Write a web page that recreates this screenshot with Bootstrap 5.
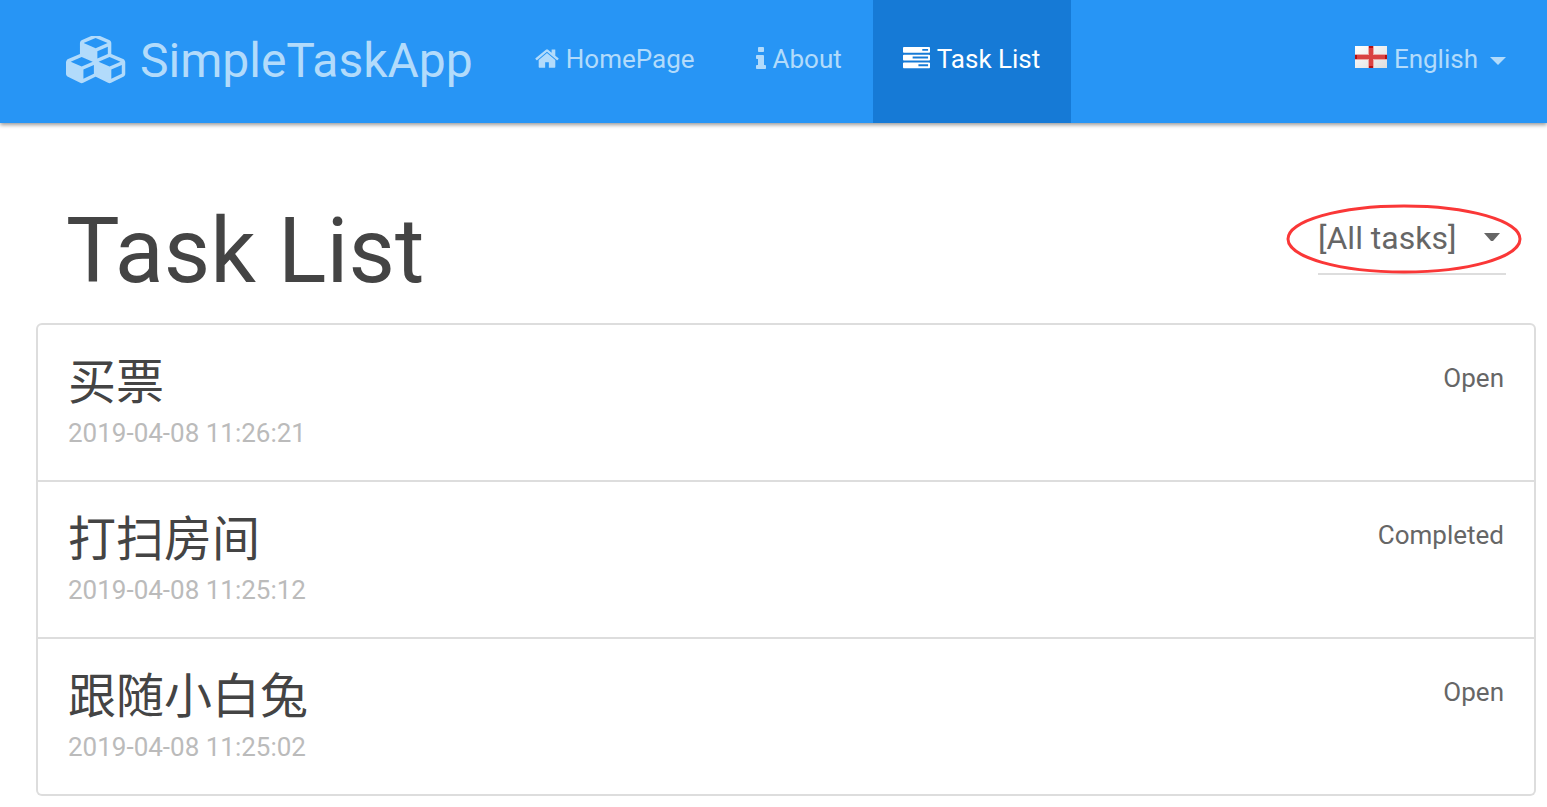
<!DOCTYPE html>
<html lang="en">
<head>
<meta charset="utf-8">
<meta name="viewport" content="width=device-width, initial-scale=1">
<title>Task List - SimpleTaskApp</title>
<link href="https://cdn.jsdelivr.net/npm/bootstrap@5.3.0/dist/css/bootstrap.min.css" rel="stylesheet">
<style>
body { font-family: Roboto, "Noto Sans CJK SC", sans-serif; font-size: 26px; line-height: 33px; color: #666; background: #fff; }
.app-nav { background: #2795f5; box-shadow: 0 2px 4px rgba(0,0,0,.4); padding: 0 41px 0 66px; min-height: 123px; }
.app-nav a, .app-nav button { color: #b2dbfb; text-decoration: none; }
.app-nav .navbar-brand { font-size: 48px; line-height: 56px; padding: 33px 32px 34px 0; margin: 0; gap: 13px; }
.app-nav .navbar-nav .nav-link { padding: 43px 31px 47px 30px; gap: 7px; }
.app-nav .navbar-nav .nav-link.active { background: #167ad6; color: #fff; }
.lang { border: 0; background: none; padding: 43px 0 47px; gap: 7px; }
.lang::after { margin-left: 5px; border-width: 8px 8px 0; margin-top: 3px; }
.page { padding: 79px 11px 0 36px; }
.page-head { padding: 0 30px; margin-bottom: 22px; }
.page-head h1 { font-size: 90px; line-height: 99px; font-weight: 400; color: #444; margin: 0; }
.filter { margin-top: 7px; }
.filter select { appearance: none; width: 188px; height: 66px; border: 0; border-bottom: 2px solid #ddd; color: #666; font-size: 32px; padding: 0 32px 5px 0; background: url("data:image/svg+xml,%3Csvg xmlns='http://www.w3.org/2000/svg' viewBox='0 0 16 8'%3E%3Cpath d='M0 0h16L9 8H7z' fill='%23666'/%3E%3C/svg%3E") no-repeat right 6px top 24px / 16px 8px; }
.ring { position: absolute; left: -32px; top: -5px; width: 236px; height: 70px; pointer-events: none; }
.tasks { --bs-list-group-border-color: #ddd; --bs-list-group-border-width: 2px; --bs-list-group-border-radius: 6px; --bs-list-group-color: #666; }
.tasks .list-group-item { padding: 30px; }
.tasks h2 { font-size: 48px; line-height: 56px; font-weight: 400; color: #444; margin: 0 0 6px; }
.tasks time { display: block; color: #bbb; }
.tasks .state { padding-top: 7px; }
svg { fill: currentColor; flex: none; }
</style>
</head>
<body>
<nav class="app-nav navbar navbar-expand align-items-stretch">
  <a class="navbar-brand d-flex align-items-center" href="#">
    <svg width="61" height="50" viewBox="0 80 2240 1792" aria-hidden="true"><path d="M640 1632l384-192v-314l-384 164v342zm-64-454l404-173-404-173-404 173zm1088 454l384-192v-314l-384 164v342zm-64-454l404-173-404-173-404 173zm-448-293l384-165v-266l-384 164v267zm-64-379l441-189-441-189-441 189zm1088 518v416q0 36-19 67t-52 47l-448 224q-25 14-57 14t-57-14l-448-224q-4-2-7-4-2 2-7 4l-448 224q-25 14-57 14t-57-14l-448-224q-33-16-52-47t-19-67v-416q0-38 21.500-70t56.500-48l434-186v-400q0-38 21.500-70t56.500-48l448-192q23-10 50-10t50 10l448 192q35 16 56.500 48t21.500 70v400l434 186q36 16 57 48t21 70z"/></svg>
    <span>SimpleTaskApp</span>
  </a>
  <ul class="navbar-nav me-auto">
    <li class="nav-item"><a class="nav-link d-flex align-items-center" href="#">
      <svg width="24" height="26" viewBox="64 96 1664 1792" aria-hidden="true"><path d="M1472 992v480q0 26-19 45t-45 19h-384v-384h-256v384h-384q-26 0-45-19t-19-45v-480q0-1 .5-3t.5-3l575-474 575 474q1 2 1 6zm223-69l-62 74q-8 9-21 11h-3q-13 0-21-7l-692-577-692 577q-12 8-24 7-13-2-21-11l-62-74q-8-10-7-23.500t11-21.500l719-599q32-26 76-26t76 26l244 204v-195q0-14 9-23t23-9h192q14 0 23 9t9 23v408l219 182q10 8 11 21.500t-7 23.500z"/></svg>
      <span>HomePage</span></a></li>
    <li class="nav-item"><a class="nav-link d-flex align-items-center" href="#">
      <svg width="10" height="26" viewBox="576 128 640 1664" aria-hidden="true"><path d="M1216 1344v128q0 26-19 45t-45 19h-512q-26 0-45-19t-19-45v-128q0-26 19-45t45-19h64v-384h-64q-26 0-45-19t-19-45v-128q0-26 19-45t45-19h384q26 0 45 19t19 45v576h64q26 0 45 19t19 45zm-128-1152v192q0 26-19 45t-45 19h-256q-26 0-45-19t-19-45v-192q0-26 19-45t45-19h256q26 0 45 19t19 45z"/></svg>
      <span>About</span></a></li>
    <li class="nav-item"><a class="nav-link active d-flex align-items-center" aria-current="page" href="#">
      <svg width="27" height="27" viewBox="0 64 1792 1792" aria-hidden="true"><path d="M1024 1408h640v-128h-640v128zm-384-512h1024v-128h-1024v128zm640-512h384v-128h-384v128zm512 832v256q0 26-19 45t-45 19h-1664q-26 0-45-19t-19-45v-256q0-26 19-45t45-19h1664q26 0 45 19t19 45zm0-512v256q0 26-19 45t-45 19h-1664q-26 0-45-19t-19-45v-256q0-26 19-45t45-19h1664q26 0 45 19t19 45zm0-512v256q0 26-19 45t-45 19h-1664q-26 0-45-19t-19-45v-256q0-26 19-45t45-19h1664q26 0 45 19t19 45z" fill-rule="evenodd"/></svg>
      <span>Task List</span></a></li>
  </ul>
  <button class="lang dropdown-toggle d-flex align-items-center" type="button" data-bs-toggle="dropdown" aria-expanded="false">
    <svg width="32" height="28" viewBox="0 0 32 28" aria-hidden="true">
      <defs><linearGradient id="flagShade" x2="1" y2="1"><stop offset="0" stop-color="#fff"/><stop offset="1" stop-color="#ddd"/></linearGradient></defs>
      <path d="M0 0h32v22H0z" fill="url(#flagShade)"/>
      <path d="M13 0h6v22h-6zM0 8h32v6H0z" fill="#eda9a6"/>
      <path d="M14 0h4v9h14v4H18v9h-4v-9H0V9h14z" fill="#d94141"/>
      <path d="M14 0h4v2h-4zM14 20h4v2h-4zM0 9h2v4H0zM30 9h2v4h-2z" fill="#b40f12"/>
    </svg>
    <span>English</span>
  </button>
</nav>
<main class="page container-fluid">
  <div class="page-head d-flex justify-content-between align-items-start">
    <h1>Task List</h1>
    <div class="filter position-relative">
      <select aria-label="Filter tasks by state">
        <option selected>[All tasks]</option>
        <option>Open</option>
        <option>Completed</option>
      </select>
      <svg class="ring" viewBox="0 0 236 70" aria-hidden="true"><ellipse cx="118" cy="35" rx="116" ry="33" fill="none" stroke="#fa3737" stroke-width="3"/></svg>
    </div>
  </div>
  <ul class="tasks list-group">
    <li class="list-group-item d-flex justify-content-between align-items-start">
      <div><h2 lang="zh-CN">买票</h2><time datetime="2019-04-08T11:26:21">2019-04-08 11:26:21</time></div>
      <span class="state">Open</span>
    </li>
    <li class="list-group-item d-flex justify-content-between align-items-start">
      <div><h2 lang="zh-CN">打扫房间</h2><time datetime="2019-04-08T11:25:12">2019-04-08 11:25:12</time></div>
      <span class="state">Completed</span>
    </li>
    <li class="list-group-item d-flex justify-content-between align-items-start">
      <div><h2 lang="zh-CN">跟随小白兔</h2><time datetime="2019-04-08T11:25:02">2019-04-08 11:25:02</time></div>
      <span class="state">Open</span>
    </li>
  </ul>
</main>
<script src="https://cdn.jsdelivr.net/npm/bootstrap@5.3.0/dist/js/bootstrap.bundle.min.js"></script>
</body>
</html>
